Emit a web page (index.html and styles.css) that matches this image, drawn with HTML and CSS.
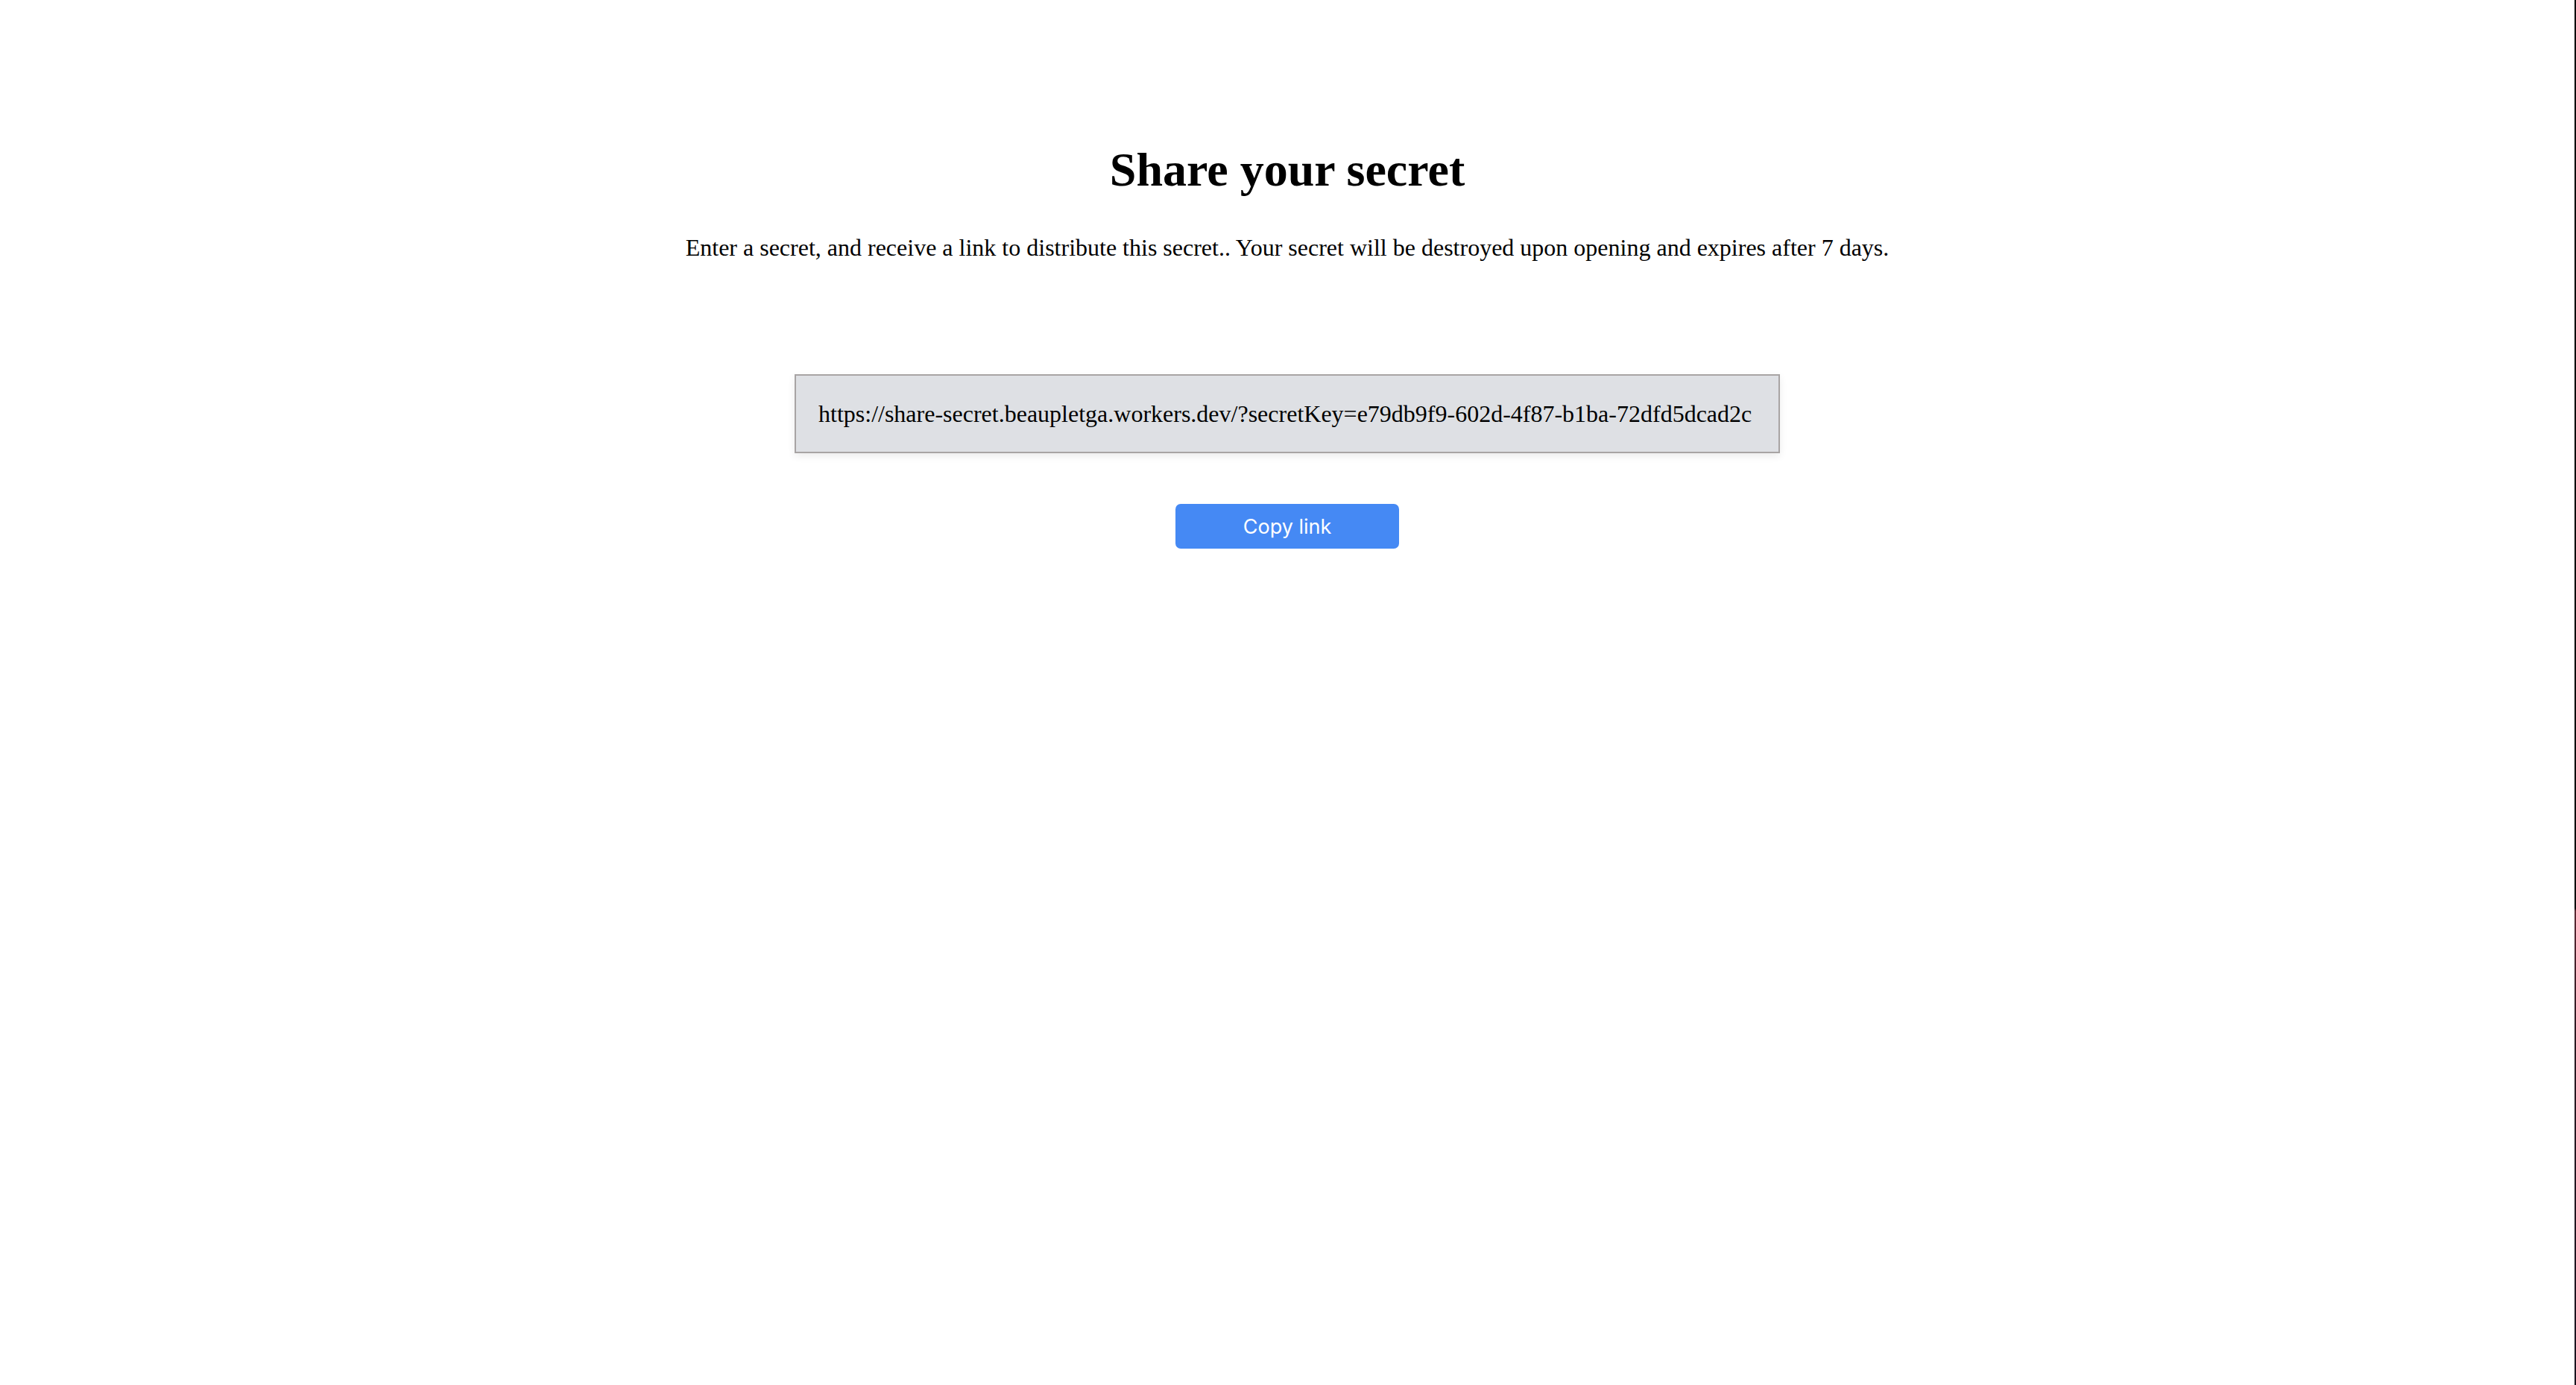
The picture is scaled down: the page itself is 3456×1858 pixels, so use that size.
FILE: index.html
```html
<!DOCTYPE html>
<html lang="en">
<head>
<meta charset="utf-8">
<title>Share your secret</title>
<link rel="stylesheet" href="styles.css">
</head>
<body>
<main class="page">
  <h1 class="title">Share your secret</h1>
  <p class="lead">Enter a secret, and receive a link to distribute this secret.. Your secret will be destroyed upon opening and expires after 7 days.</p>
  <input class="link-field" type="text" readonly value="https://share-secret.beaupletga.workers.dev/?secretKey=e79db9f9-602d-4f87-b1ba-72dfd5dcad2c">
  <button class="copy-btn" type="button">Copy link</button>
</main>
<div class="edge"></div>
</body>
</html>
```
FILE: styles.css
```css
html, body {
  margin: 0;
  padding: 0;
  background: #ffffff;
}
body {
  font-family: "Liberation Serif", "Times New Roman", serif;
  color: #000;
  overflow: hidden;
  height: 1858px;
}
.page {
  display: flex;
  flex-direction: column;
  align-items: center;
  padding-top: 191px;
  padding-right: 2px;
}
.title {
  font-size: 64px;
  font-weight: bold;
  margin: 0;
  line-height: normal;
}
.lead {
  font-size: 32px;
  margin: 49px 0 0;
  line-height: normal;
}
.link-field {
  box-sizing: border-box;
  margin-top: 151px;
  width: 1322px;
  height: 106px;
  padding: 0 30px;
  border: 2px solid #a8a4a4;
  background: #dee0e4;
  font-family: "Liberation Serif", "Times New Roman", serif;
  font-size: 32px;
  color: #000;
  box-shadow: 0 4px 10px rgba(0, 0, 0, 0.08);
  outline: none;
}
.copy-btn {
  margin-top: 68px;
  width: 300px;
  height: 60px;
  border: none;
  border-radius: 7px;
  background: #4589f4;
  color: #fff;
  font-family: "Inter", "Roboto", sans-serif;
  font-size: 27px;
  cursor: pointer;
}
.edge {
  position: fixed;
  top: 0;
  right: 0;
  width: 2px;
  height: 100%;
  background: linear-gradient(to bottom, #000 0, #000 1218px, #5a2a34 1222px, #2a1a22 1400px, #1a1420 100%);
}
```
